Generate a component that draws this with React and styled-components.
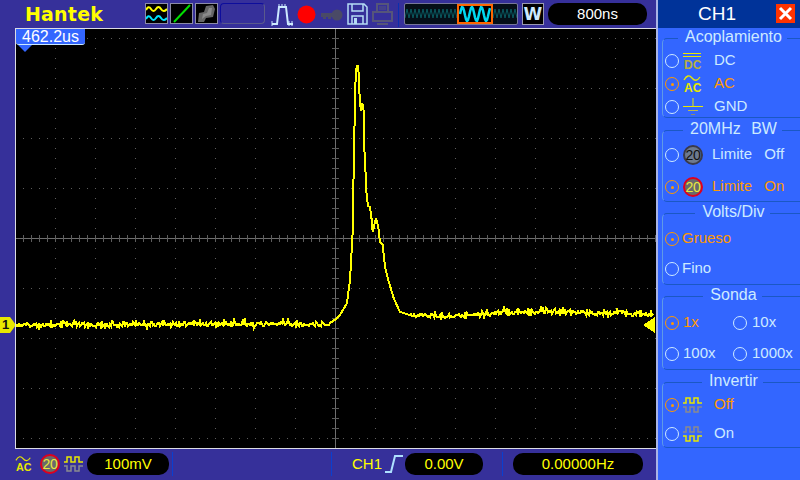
import React from 'react'
import styled, { createGlobalStyle } from 'styled-components'

const FONT = '"Liberation Sans", Arial, sans-serif'
const BAR = '#36309a'
const PANEL = '#3366ff'
const PALE = '#cdeaff'
const ORANGE = '#ff9900'
const YELLOW = '#ffff00'

const Global = createGlobalStyle`
    html, body { margin: 0; padding: 0; background: ${BAR}; }
    body { font-family: ${FONT}; }
`

const Page = styled.div`
    width: 800px;
    height: 480px;
    display: flex;
    overflow: hidden;
    background: ${BAR};
`
const Main = styled.div`
    width: 656px;
    display: flex;
    flex-direction: column;
`
const TopBar = styled.div`
    height: 28px;
    box-sizing: border-box;
    padding-top: 3px;
    display: flex;
    align-items: flex-start;
`
const Logo = styled.div`
    width: 145px;
    box-sizing: border-box;
    padding-left: 25px;
    color: ${YELLOW};
    font: bold 19px/22px "DejaVu Sans", sans-serif;
    letter-spacing: 0.2px;
`
const Thumb = styled.div`
    width: 23px;
    height: 21px;
    box-sizing: border-box;
    margin-right: 2px;
    border: 1px solid #8c8ca8;
    background: #000;
    display: flex;
`
const EmptySlot = styled.div`
    width: 45px;
    height: 21px;
    box-sizing: border-box;
    margin-right: 6px;
    border: 1px solid #0d0d9c;
    border-right-color: #5a5a8c;
    border-bottom-color: #5a5a8c;
    border-radius: 4px;
`
const BarIcon = styled.div`
    margin: ${p => p.$top || 0}px ${p => p.$gap || 0}px 0 0;
    display: flex;
`
const Divider = styled.div`
    width: 1px;
    height: ${p => p.$h}px;
    flex: none;
    margin: ${p => p.$m || '0'};
    background: ${p => p.$color || '#0a2fb0'};
`
const MemoryStrip = styled.div`
    width: 114px;
    height: 22px;
    box-sizing: border-box;
    margin-right: 4px;
    border: 1px solid #77779a;
    border-radius: 2px;
    background: #050f18;
    display: flex;
`
const ModeBox = styled.div`
    width: 22px;
    height: 22px;
    box-sizing: border-box;
    margin-right: 4px;
    border: 1px solid #9a9ab0;
    background: #000;
    color: ${PALE};
    font: bold 17px/20px "DejaVu Sans", sans-serif;
    text-align: center;
`
const Pill = styled.div`
    width: ${p => p.$w}px;
    height: 22px;
    flex: none;
    margin-left: ${p => p.$ml || 0}px;
    border-radius: 10px;
    background: #000;
    color: ${p => p.$color};
    font-size: 15px;
    line-height: 22px;
    text-align: center;
`
const ScopeRow = styled.div`
    height: 421px;
    display: flex;
`
const LeftStrip = styled.div`
    width: 15px;
    position: relative;
`
const ChannelMarker = styled.div`
    position: absolute;
    left: 0;
    top: 289px;
    width: 16px;
    height: 16px;
    box-sizing: border-box;
    padding-left: 2px;
    background: #e8e800;
    clip-path: polygon(0 0, 10px 0, 16px 8px, 10px 16px, 0 16px);
    color: #111;
    font: bold 13px/16px ${FONT};
`
const Screen = styled.div`
    width: 641px;
    height: 421px;
    box-sizing: border-box;
    position: relative;
    background: #000;
    border: 1px solid #dcdce4;
    border-right: none;
    display: flex;
`
const TimeTag = styled.div`
    position: absolute;
    left: 0;
    top: 0;
    width: 69px;
    height: 15px;
    border-radius: 0 0 3px 3px;
    background: ${PANEL};
    border-bottom: 1px solid ${PALE};
    color: #fff;
    font-size: 16px;
    line-height: 15px;
    text-align: center;
    &::after {
        content: '';
        position: absolute;
        left: 2px;
        top: 16px;
        border-left: 7px solid transparent;
        border-right: 7px solid transparent;
        border-top: 7px solid ${PANEL};
    }
`
const StatusBar = styled.div`
    height: 31px;
    box-sizing: border-box;
    padding: 3px 0 4px 15px;
    display: flex;
    align-items: center;
`
const StatusLabel = styled.div`
    color: ${YELLOW};
    font-size: 15px;
    line-height: 22px;
    margin: 0 3px 0 20px;
`

const Panel = styled.div`
    width: 144px;
    box-sizing: border-box;
    border-left: 2px solid #a9b4e6;
    background: ${PANEL};
    display: flex;
    flex-direction: column;
`
const PanelHeader = styled.div`
    height: 28px;
    flex: none;
    position: relative;
    background: #003399;
    color: #fff;
    font-size: 19px;
    line-height: 28px;
    text-align: center;
    padding-right: 24px;
`
const CloseButton = styled.div`
    position: absolute;
    right: 5px;
    top: 4px;
    width: 19px;
    height: 19px;
    background: #ff3300;
    display: flex;
`
const Group = styled.fieldset`
    height: ${p => p.$h}px;
    box-sizing: border-box;
    margin: ${p => p.$mt}px 0 0 4px;
    padding: 0 0 0 2px;
    min-width: 0;
    border: 1px solid #1b58c4;
    border-left-color: #5f9ae6;
    border-right: none;
    border-radius: 5px 0 0 5px;
`
const GroupTitle = styled.legend`
    margin: 0 auto;
    padding: 0 6px;
    color: ${PALE};
    font-size: 16px;
    line-height: 16px;
    word-spacing: ${p => p.$words || 0}px;
    transform: translate(1px, -1px);
`
const Rows = styled.div`
    padding-top: ${p => p.$top}px;
    display: flex;
    flex-direction: column;
    row-gap: ${p => p.$gap}px;
`
const GridRows = styled.div`
    padding-top: ${p => p.$top}px;
    display: grid;
    grid-template-columns: 68px 68px;
    row-gap: ${p => p.$gap}px;
`
const Row = styled.div`
    height: 20px;
    display: flex;
    align-items: center;
    color: ${p => (p.$on ? ORANGE : PALE)};
    font-size: 15px;
    white-space: pre;
`
const Label = styled.span`
    margin-bottom: 4px;
    word-spacing: ${p => p.$words || 0}px;
`
const Radio = styled.span`
    width: 14px;
    height: 14px;
    flex: none;
    box-sizing: border-box;
    margin-right: ${p => p.$gap}px;
    border-radius: 50%;
    border: 1px solid ${p => (p.$on ? ORANGE : PALE)};
    display: flex;
    align-items: center;
    justify-content: center;
    &::after {
        content: '';
        width: 3px;
        height: 3px;
        border-radius: 50%;
        background: ${p => (p.$on ? ORANGE : 'transparent')};
    }
`
const RowIcon = styled.span`
    width: ${p => p.$w}px;
    flex: none;
    display: flex;
`
const Badge = styled.span`
    width: 20px;
    height: 20px;
    flex: none;
    box-sizing: border-box;
    border-radius: 50%;
    border: 2px solid ${p => (p.$on ? '#e0001c' : '#3a3a4a')};
    background: ${p => (p.$on ? '#6a6a6a' : '#6d7a90')};
    color: ${p => (p.$on ? '#e8e840' : '#111')};
    font: 14px/16px ${FONT};
    text-align: center;
    letter-spacing: -0.4px;
`
const StatusBadge = styled(Badge)`
    margin: 0 4px 0 7px;
`

// drawings
const WaveThumb = () => (
    <svg width="21" height="19" fill="none" strokeWidth="2">
        <path d="M0 6 Q2.5 1 5 5 T10 5 T15 5 T21 5" stroke="#ffff00" />
        <path d="M0 15 Q2.5 10 5 14 T10 14 T15 14 T21 14" stroke="#00e5ff" />
    </svg>
)
const LineThumb = () => (
    <svg width="21" height="19">
        <path d="M3 18 L19 1" stroke="#00e000" strokeWidth="2" />
    </svg>
)
const PersistThumb = () => (
    <svg width="21" height="19">
        <path d="M2 18 L3 9 L8 8 L10 2 L17 1 L19 5 L17 13 L10 14 L8 18 Z" fill="#666" />
        <path d="M6 15 L7 10 L11 9 L13 4 L16 4 L15 11 L10 12 Z" fill="#8a8a8a" />
    </svg>
)
const PulseIcon = () => (
    <svg width="22" height="24" fill="none" stroke="#cdeaff" strokeWidth="2">
        <path d="M1 21 H6 L8 4 H15 L17 21 H22" />
        <path d="M8 1 V5 M11 1 V5 M14 1 V5 M1 18 V23 M18 18 V23 M21 18 V23" strokeWidth="1" />
    </svg>
)
const RecordIcon = () => (
    <svg width="19" height="19">
        <circle cx="9.5" cy="9.5" r="9" fill="#ff0000" />
    </svg>
)
const KeyIcon = () => (
    <svg width="22" height="14" fill="#4a4a66">
        <circle cx="16" cy="6" r="5.5" />
        <rect x="0" y="4" width="12" height="4" />
        <rect x="2" y="7" width="3" height="3" />
        <rect x="7" y="7" width="3" height="3" />
    </svg>
)
const FloppyIcon = () => (
    <svg width="21" height="22" fill="none" stroke="#b5dcf5" strokeWidth="1.5">
        <path d="M1 1 H17 L20 4 V21 H1 Z" />
        <path d="M5 1 V8 H16 V1 M5 21 V13 H16 V21" />
        <rect x="7" y="15" width="3" height="6" fill="#b5dcf5" stroke="none" />
    </svg>
)
const PrinterIcon = () => (
    <svg width="21" height="22" fill="none" stroke="#55557a" strokeWidth="2">
        <path d="M5 1 H16 V9 H5 Z M1 9 H20 V18 H1 Z M5 21 H16" />
        <path d="M7 4 H14 M7 6 H14" strokeWidth="1" />
    </svg>
)
const zigzag = (w, h, step, top) => {
    let d = `M0 ${top + h}`
    for (let x = step / 2, i = 0; x <= w; x += step / 2, i++) {
        d += ` L${x} ${i % 2 === 0 ? top : top + h}`
    }
    return d
}
const sine = (w, amp, period, mid) => {
    let d = `M0 ${mid}`
    for (let x = 1; x <= w; x++) {
        d += ` L${x} ${(mid - amp * Math.sin((x / period) * 2 * Math.PI)).toFixed(1)}`
    }
    return d
}
const MemoryWave = () => (
    <svg width="112" height="20" fill="none">
        <path d={zigzag(112, 9, 4, 5)} stroke="#0a5a60" />
        <rect x="53" y="0" width="35" height="20" fill="#000" />
        <path d={sine(30, 7, 9.5, 10)} transform="translate(55 0)" stroke="#00d8f0" strokeWidth="2.5" />
        <rect x="53" y="1" width="34" height="18" stroke="#ff6600" strokeWidth="2" />
    </svg>
)
const CloseIcon = () => (
    <svg width="19" height="19" stroke="#fff" strokeWidth="3">
        <path d="M4 4 L15 15 M15 4 L4 15" />
    </svg>
)
const DcIcon = () => (
    <svg width="20" height="20">
        <path d="M0 2.5 H18 M0 5.5 H18" stroke="#e8e800" />
        <text x="1" y="18" fontFamily={FONT} fontSize="12" fontWeight="bold" fill="#b8b040">DC</text>
    </svg>
)
const AcIcon = ({ width = 20 }) => (
    <svg width={width} height="20" viewBox="0 0 20 20">
        <path d="M1 6 Q5 -1 9 4 T17 3" stroke="#e8e800" fill="none" strokeWidth="1.3" />
        <text x="1" y="18" fontFamily={FONT} fontSize="12" fontWeight="bold" fill="#e8e800">AC</text>
    </svg>
)
const GroundIcon = () => (
    <svg width="20" height="20">
        <path d="M10 1 V9 M0 9.5 H20" stroke="#e8e800" />
        <path d="M5 13.5 H15" stroke="#c0b848" />
        <path d="M8 17.5 H12" stroke="#8a8a70" />
    </svg>
)
const SquarePair = ({ top, bottom }) => (
    <svg width="19" height="16" fill="none" strokeWidth="1.5">
        <path d="M0 6 H3 V1 H7 V6 H11 V1 H15 V6 H19" stroke={top} />
        <path d="M0 10 H3 V15 H7 V10 H11 V15 H15 V10 H19" stroke={bottom} />
    </svg>
)
const SlopeIcon = () => (
    <svg width="18" height="22" fill="none" stroke="#aee0ff" strokeWidth="2">
        <path d="M0 19 H6 L10 3 H18" />
    </svg>
)

// fixed noise, so every render draws the same trace
const noise = x => {
    const v = Math.sin(x * 12.9898) * 43758.5453
    return v - Math.floor(v)
}
const PEAK = [
    [330, 323], [336, 319], [340, 315], [347, 303], [350, 280], [351.7, 250], [352.7, 232],
    [353.3, 190], [354.3, 137], [355.3, 85], [356.7, 66], [358.3, 66], [359, 85], [360, 102], [361, 111],
    [362, 103], [363.3, 107], [364, 118], [364.3, 148], [365.7, 175], [366.3, 188], [366.7, 198],
    [368.3, 206], [370, 207], [371.7, 220], [372.7, 232], [374.3, 225], [376, 218], [378.3, 227],
    [380, 242], [382.7, 245], [385, 267], [388.3, 280], [393.3, 297], [396.7, 305], [400, 312], [410, 315],
]
const TAIL = [[410, 315], [450, 316], [500, 312], [560, 312], [655, 314]]
const jitter = x => Math.round((noise(x) - 0.5) * 4) + (noise(x * 3) > 0.9 ? 2 : 0) - (noise(x * 5) > 0.93 ? 3 : 0)
const tracePath = () => {
    let d = ''
    for (let x = 16; x < 330; x++) {
        d += `${d ? 'L' : 'M'}${x} ${Math.round(325 - ((x - 16) / 314) * 1.5) + jitter(x)} `
    }
    PEAK.forEach(([x, y]) => {
        d += `L${x} ${y} `
    })
    for (let x = 411; x < 654; x++) {
        let i = 0
        while (TAIL[i + 1][0] < x) i++
        const [x0, y0] = TAIL[i]
        const [x1, y1] = TAIL[i + 1]
        d += `L${x} ${Math.round(y0 + ((x - x0) / (x1 - x0)) * (y1 - y0)) + jitter(x)} `
    }
    return d
}
const gridDots = () => {
    let d = ''
    for (let k = 0; k < 9; k++) {
        const y = 38 + k * 50
        if (y === 238) continue
        for (let x = 23; x < 656; x += 8) d += `M${x} ${y}h1v1h-1z`
    }
    for (let c = 0; c < 15; c++) {
        const x = 55 + c * 40
        if (x === 335) continue
        for (let y = 38; y < 448; y += 10) d += `M${x} ${y}h1v1h-1z`
    }
    return d
}
const axisTicks = () => {
    let d = ''
    for (let y = 38; y < 448; y += 10) d += `M332 ${y}h7`
    for (let x = 23; x < 656; x += 8) d += `M${x} 235v7`
    return d
}

const Graticule = () => (
    <svg width="640" height="419" viewBox="16 29 640 419" shapeRendering="crispEdges">
        <path d={gridDots()} fill="#5c5c5c" />
        <path d="M335 29 V448 M16 238.5 H656" stroke="#6e6e6e" fill="none" />
        <path d={axisTicks()} stroke="#5c5c5c" fill="none" />
        <path d={tracePath()} stroke="#ffff00" strokeWidth="2" fill="none" />
        <polygon points="655,317 643,325 655,333" fill="#ffff00" />
    </svg>
)

const App = () => (
    <Page>
        <Global />
        <Main>
            <TopBar>
                <Logo>Hantek</Logo>
                <Thumb><WaveThumb /></Thumb>
                <Thumb><LineThumb /></Thumb>
                <Thumb><PersistThumb /></Thumb>
                <EmptySlot />
                <BarIcon $gap={4}><PulseIcon /></BarIcon>
                <BarIcon $gap={5} $top={2}><RecordIcon /></BarIcon>
                <BarIcon $gap={4} $top={6}><KeyIcon /></BarIcon>
                <BarIcon $gap={4}><FloppyIcon /></BarIcon>
                <BarIcon><PrinterIcon /></BarIcon>
                <Divider $h={24} $m="0 5px" />
                <MemoryStrip><MemoryWave /></MemoryStrip>
                <ModeBox>W</ModeBox>
                <Pill $w={99} $color="#fff">800ns</Pill>
            </TopBar>
            <ScopeRow>
                <LeftStrip>
                    <ChannelMarker>1</ChannelMarker>
                </LeftStrip>
                <Screen>
                    <Graticule />
                    <TimeTag>462.2us</TimeTag>
                </Screen>
            </ScopeRow>
            <StatusBar>
                <AcIcon width={18} />
                <StatusBadge $on>20</StatusBadge>
                <SquarePair top="#e8e800" bottom="#8a8a90" />
                <Pill $w={82} $ml={4} $color={YELLOW}>100mV</Pill>
                <Divider $h={24} $m="0 0 0 3px" $color="#0a3fd0" />
                <Divider $h={24} $m="0 0 0 158px" $color="#0a3fd0" />
                <StatusLabel>CH1</StatusLabel>
                <SlopeIcon />
                <Pill $w={78} $ml={2} $color={YELLOW}>0.00V</Pill>
                <Divider $h={24} $m="0 0 0 19px" $color="#0a3fd0" />
                <Pill $w={130} $ml={10} $color={YELLOW}>0.00000Hz</Pill>
            </StatusBar>
        </Main>
        <Panel>
            <PanelHeader>
                CH1
                <CloseButton><CloseIcon /></CloseButton>
            </PanelHeader>
            <Group $h={88} $mt={2}>
                <GroupTitle>Acoplamiento</GroupTitle>
                <Rows $top={5} $gap={3}>
                    <Row><Radio $gap={4} /><RowIcon $w={31}><DcIcon /></RowIcon><Label>DC</Label></Row>
                    <Row $on><Radio $on $gap={4} /><RowIcon $w={31}><AcIcon /></RowIcon><Label>AC</Label></Row>
                    <Row><Radio $gap={4} /><RowIcon $w={31}><GroundIcon /></RowIcon><Label>GND</Label></Row>
                </Rows>
            </Group>
            <Group $h={80} $mt={4}>
                <GroupTitle $words={6}>20MHz BW</GroupTitle>
                <Rows $top={7} $gap={12}>
                    <Row><Radio $gap={4} /><RowIcon $w={29}><Badge>20</Badge></RowIcon><Label $words={2}>{'Limite  Off'}</Label></Row>
                    <Row $on><Radio $on $gap={4} /><RowIcon $w={29}><Badge $on>20</Badge></RowIcon><Label $words={2}>{'Limite  On'}</Label></Row>
                </Rows>
            </Group>
            <Group $h={80} $mt={3}>
                <GroupTitle>Volts/Div</GroupTitle>
                <Rows $top={8} $gap={10}>
                    <Row $on><Radio $on $gap={3} /><Label>Grueso</Label></Row>
                    <Row><Radio $gap={3} /><Label>Fino</Label></Row>
                </Rows>
            </Group>
            <Group $h={82} $mt={3}>
                <GroupTitle>Sonda</GroupTitle>
                <GridRows $top={9} $gap={11}>
                    <Row $on><Radio $on $gap={4} /><Label>1x</Label></Row>
                    <Row><Radio $gap={5} /><Label>10x</Label></Row>
                    <Row><Radio $gap={4} /><Label>100x</Label></Row>
                    <Row><Radio $gap={5} /><Label>1000x</Label></Row>
                </GridRows>
            </Group>
            <Group $h={74} $mt={4}>
                <GroupTitle>Invertir</GroupTitle>
                <Rows $top={5} $gap={9}>
                    <Row $on><Radio $on $gap={4} /><RowIcon $w={31}><SquarePair top="#e8e800" bottom="#8a8a90" /></RowIcon><Label>Off</Label></Row>
                    <Row><Radio $gap={4} /><RowIcon $w={31}><SquarePair top="#8a8a90" bottom="#e8e800" /></RowIcon><Label>On</Label></Row>
                </Rows>
            </Group>
        </Panel>
    </Page>
)

export default App
